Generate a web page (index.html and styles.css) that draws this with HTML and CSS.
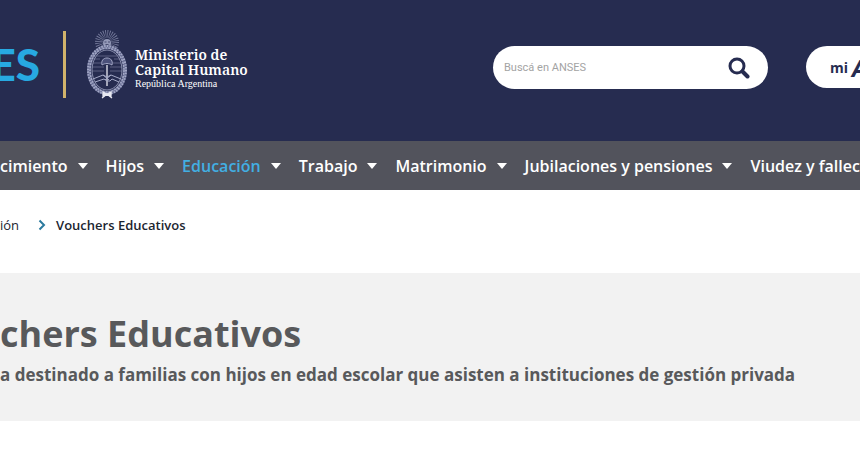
FILE: index.html
```html
<!DOCTYPE html>
<html lang="es">
<head>
  <meta charset="UTF-8">
  <meta name="viewport" content="width=device-width, initial-scale=1.0">
  <title>Vouchers Educativos</title>
  <link rel="stylesheet" href="styles.css">
</head>
<body>

  <header class="header">
    <div class="brand">
      <a href="#" class="logo">ES</a>
      <span class="divider"></span>
      <svg class="escudo" viewBox="0 0 44 70" fill="none" stroke="#a3a8c6">
        <!-- sol -->
        <circle cx="21" cy="13" r="8" stroke-width="8" stroke-dasharray="0.7 1.1" opacity="0.65"/>
        <circle cx="21" cy="14" r="4" fill="#9499b8" stroke="none"/>
        <path d="M18.500 13h2M22 13h2M19.500 15.500h3" stroke="#262c50" stroke-width="0.700"/>
        <!-- laureles -->
        <ellipse cx="21" cy="41" rx="18" ry="23" fill="#262c50" stroke="#666c92" stroke-width="4"/>
        <ellipse cx="21" cy="41" rx="19" ry="24" stroke-width="2" stroke-dasharray="1.500 1.300"/>
        <ellipse cx="21" cy="41" rx="17" ry="22" stroke-width="1.500" stroke-dasharray="2 1"/>
        <ellipse cx="21" cy="41" rx="15" ry="20" fill="#262c50" stroke-width="0.800"/>
        <!-- campo superior -->
        <path d="M11 27h20M8 30h6M28 30h6M7 34h11M24 34h11M6 38h12M24 38h12M6 42h12M24 42h12" stroke-width="0.600" opacity="0.700"/>
        <!-- gorro y pica -->
        <path d="M16 36c-1-4 1-7 5-7s6 3 5 7c-3-2-7-2-10 0z" fill="#4b517a" stroke-width="1"/>
        <path d="M21 36v21" stroke="#e8e9f2" stroke-width="1.300"/>
        <!-- manos -->
        <path d="M7 50l10-4 4 2 4-2 10 4M9 53l9-3 3 2h3l2-2 7 3M17 46l6 5M25 46l-6 5" stroke-width="1"/>
        <!-- moño -->
        <path d="M17 63l4 2 4-2v4l-4-1-4 1zM20 66l-4 3M22 66l4 3" fill="#e8e9f2" stroke="#e8e9f2" stroke-width="1.300"/>
      </svg>
      <div class="ministerio">
        <strong>Ministerio de</strong>
        <strong>Capital Humano</strong>
        <span>República Argentina</span>
      </div>
    </div>

    <form class="search">
      <input type="text" placeholder="Buscá en ANSES" aria-label="Buscá en ANSES">
      <button type="submit" aria-label="Buscar">
        <svg viewBox="0 0 22 22" fill="none" stroke="#262c50">
          <circle cx="9" cy="9" r="7" stroke-width="3"/>
          <path d="M14.500 14.500l5 5" stroke-width="4" stroke-linecap="round"/>
        </svg>
      </button>
    </form>

    <a href="#" class="mi-anses">mi <em>ANSES</em></a>
  </header>

  <nav class="navbar">
    <a href="#">cimiento</a>
    <a href="#">Hijos</a>
    <a href="#" class="active">Educación</a>
    <a href="#">Trabajo</a>
    <a href="#">Matrimonio</a>
    <a href="#">Jubilaciones y pensiones</a>
    <a href="#">Viudez y fallecimiento</a>
  </nav>

  <div class="breadcrumb">
    <a href="#">ión</a>
    <svg viewBox="0 0 8 12" fill="none" stroke="#2b7a9e" stroke-width="2">
      <path d="M1.500 1.500L6 6l-4.500 4.500"/>
    </svg>
    <span>Vouchers Educativos</span>
  </div>

  <main class="banner">
    <h1>chers Educativos</h1>
    <p>a destinado a familias con hijos en edad escolar que asisten a instituciones de gestión privada</p>
  </main>

</body>
</html>
```
FILE: styles.css
```css
* {
  box-sizing: border-box;
}

body {
  margin: 0;
  background-color: #fff;
  font-family: "Open Sans", "Noto Sans", sans-serif;
}

a {
  color: inherit;
  text-decoration: none;
}

.header {
  display: grid;
  grid-template-columns: 1fr 275px 54px;
  column-gap: 38px;
  align-items: center;
  padding: 28px 0 35px;
  height: 141px;
  background-color: #262c50;
}

.brand {
  display: flex;
  align-items: center;
  align-self: start;
  height: 72px;
}

/* only the end of the wordmark shows */
.logo {
  display: flex;
  justify-content: flex-end;
  width: 40px;
  overflow: hidden;
  color: #27a9e1;
  font-family: Lato, sans-serif;
  font-size: 44px;
  font-weight: 900;
  line-height: 48px;
}

.divider {
  width: 3px;
  height: 67px;
  margin: 0 20px 0 23px;
  background-color: #d1b36b;
}

.escudo {
  width: 44px;
  height: 70px;
}

.ministerio {
  margin-left: 5px;
  padding-top: 10px;
  color: #fff;
  font-family: "Noto Serif", "Liberation Serif", serif;
  white-space: nowrap;
}

.ministerio strong {
  display: block;
  font-size: 14px;
  font-weight: 600;
  line-height: 15px;
}

.ministerio span {
  display: block;
  font-family: "Liberation Serif", serif;
  font-size: 10px;
  line-height: 14px;
}

.search {
  display: flex;
  height: 43px;
  background-color: #fff;
  border-radius: 22px;
  overflow: hidden;
}

.search input {
  flex: 1;
  min-width: 0;
  padding: 0 11px;
  border: none;
  outline: none;
  background: none;
  font-family: Roboto, sans-serif;
  font-size: 11px;
}

.search input::placeholder {
  color: #a3a3a3;
}

.search button {
  display: flex;
  align-items: center;
  padding: 2px 18px 0;
  border: none;
  background: none;
  cursor: pointer;
}

.search svg {
  width: 22px;
  height: 22px;
}

.mi-anses {
  display: flex;
  align-items: center;
  gap: 4px;
  height: 42px;
  padding-left: 24px;
  background-color: #fff;
  border-radius: 21px 0 0 21px;
  color: #262c50;
  font-size: 14px;
  font-weight: 700;
  overflow: hidden;
}

.mi-anses em {
  font-size: 24px;
}

.navbar {
  display: flex;
  align-items: center;
  gap: 18px;
  height: 49px;
  background-color: #52535c;
  color: #fff;
  font-size: 16px;
  font-weight: 600;
  white-space: nowrap;
  overflow: hidden;
}

.navbar a {
  display: flex;
  align-items: center;
  gap: 10px;
}

.navbar a::after {
  content: "";
  border: 5px solid transparent;
  border-top: 6px solid #fff;
  border-bottom: none;
}

.navbar .active {
  color: #42afe3;
}

.breadcrumb {
  display: flex;
  align-items: center;
  height: 83px;
  padding-bottom: 13px;
  color: #1c2530;
  font-size: 13px;
}

.breadcrumb svg {
  width: 8px;
  height: 12px;
  margin: 0 10px 0 19px;
}

.breadcrumb span {
  font-weight: 600;
}

.banner {
  padding: 36px 0 30px;
  background-color: #f2f2f2;
  color: #58595b;
}

.banner h1 {
  margin: 0;
  font-size: 36px;
  line-height: 50px;
}

.banner p {
  margin: 0;
  font-size: 17px;
  font-weight: 700;
  line-height: 32px;
  white-space: nowrap;
}
```
